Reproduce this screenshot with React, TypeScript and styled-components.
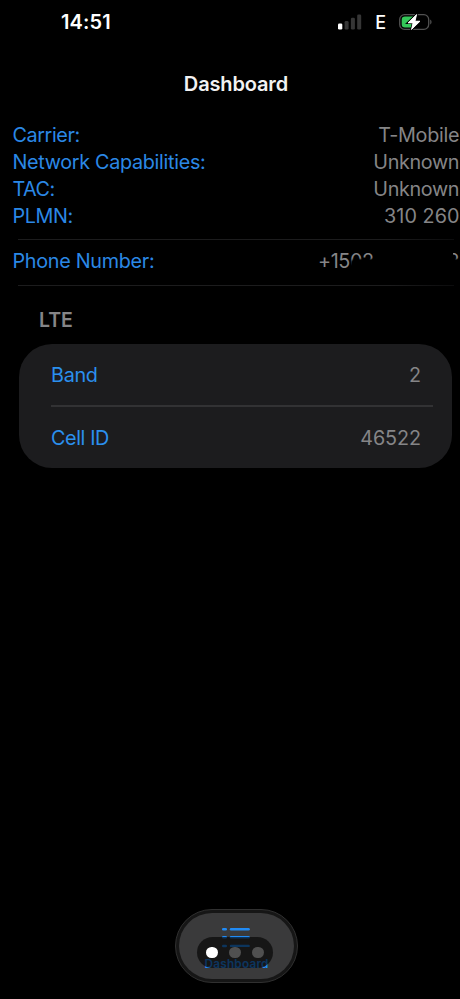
import React from 'react';
import styled, { createGlobalStyle } from 'styled-components';

const Global = createGlobalStyle`
  body { margin: 0; background: #000; }
  * { box-sizing: border-box; }
`;

const Screen = styled.main`
  width: 460px;
  height: 999px;
  background: #000;
  font-family: Inter, "Liberation Sans", sans-serif;
  display: flex;
  flex-direction: column;
  overflow: hidden;
`;

const StatusBar = styled.header`
  height: 44px;
  flex: none;
  display: flex;
  align-items: center;
  justify-content: space-between;
  padding: 0 28px 0 61px;
`;

const Label = styled.span<{ $track?: number }>`
  white-space: pre;
  letter-spacing: ${(p) => p.$track ?? 0}px;
  margin-right: ${(p) => -(p.$track ?? 0)}px;
`;

const Clock = styled(Label)`
  color: #fff;
  font-size: 20px;
  font-weight: 600;
`;

const StatusIcons = styled.div`
  display: flex;
  align-items: center;
`;

const Edge = styled.span`
  color: #fff;
  font-size: 18px;
  font-weight: 500;
  line-height: 22px;
  margin: 2px 13px 0 12px;
`;

const Title = styled.h1`
  margin: 0;
  height: 78px;
  flex: none;
  padding: 28px 0 0 12px;
  text-align: center;
  color: #f2f2f2;
  font-size: 20px;
  line-height: 25px;
  font-weight: 600;
`;

const Summary = styled.section`
  display: flex;
  flex-direction: column;
  padding: 0 0.5px 0 12.5px;
`;

const Line = styled.div<{ $height?: number }>`
  height: ${(p) => p.$height ?? 26.8}px;
  display: flex;
  align-items: center;
  justify-content: space-between;
  font-size: 19.8px;
`;

const Key = styled(Label)`
  color: #2b88e6;
`;

const Value = styled(Label)`
  color: #858587;
`;

const Rule = styled.hr<{ $top: number; $bottom: number }>`
  border: 0;
  height: 1px;
  width: 436px;
  margin: ${(p) => p.$top}px 0 ${(p) => p.$bottom}px 5px;
  background: linear-gradient(to right, #1c1c1d 85%, #0c0c0d);
`;

const Phone = styled.div`
  position: relative;
  width: 141.5px;
  height: 27px;
  display: flex;
  align-items: center;
  justify-content: space-between;
`;

const Redaction = styled.div`
  position: absolute;
  left: 34px;
  right: -2px;
  top: 13px;
  height: 14px;
  background: #000;
  border-top-left-radius: 3px;
  box-shadow: 0 0 2px 1px #000;
`;

const EndRedaction = styled.div`
  position: absolute;
  left: 56px;
  right: 7px;
  top: 0;
  bottom: 0;
  background: #000;
`;

const SectionTitle = styled.h2`
  margin: 21px 0 0 39px;
  height: 36.5px;
  flex: none;
  color: #858587;
  font-size: 19.5px;
  line-height: 26px;
  font-weight: 600;
`;

const Card = styled.section`
  margin: 0 8px 0 19px;
  height: 124px;
  border-radius: 33px;
  background: #1c1c1e;
  display: flex;
  flex-direction: column;
`;

const CardRow = styled.div`
  flex: 1;
  display: flex;
  align-items: center;
  justify-content: space-between;
  padding: 1px 31px 0 32px;
  font-size: 19.8px;
`;

const CardKey = styled(Key)`
  color: #2b90ee;
`;

const CardDivider = styled.div`
  height: 2px;
  margin: 0 19px 0 31.5px;
  background: #323234;
`;

const TabBar = styled.nav`
  margin: auto auto 16px 175px;
  width: 123px;
  height: 74px;
  flex: none;
  border: 1.5px solid #303030;
  border-radius: 37px;
  background: #161616;
  padding: 3px;
`;

const Tab = styled.div`
  position: relative;
  height: 100%;
  border-radius: 33px;
  background: #3a3a3b;
  display: flex;
  flex-direction: column;
  align-items: center;
`;

const ListIcon = styled.svg`
  display: block;
  margin: 14px 2px 0 0;
  flex: none;
`;

const TabName = styled(Label)`
  color: #218bf5;
  font-size: 11.8px;
  line-height: 14px;
  font-weight: 600;
  margin-top: 8px;
`;

const Pager = styled.div`
  position: absolute;
  left: 18px;
  top: 24px;
  width: 76px;
  height: 31px;
  border-radius: 15.5px;
  background: rgba(0, 0, 0, 0.62);
  display: flex;
  align-items: center;
  justify-content: center;
  gap: 11px;
`;

const Dot = styled.i<{ $active?: boolean }>`
  width: 11.7px;
  height: 11.7px;
  border-radius: 50%;
  background: ${(p) => (p.$active ? '#fff' : '#505050')};
`;

const summary = [
  { key: 'Carrier:', value: 'T-Mobile', keyTrack: -0.4, valueTrack: -0.3 },
  { key: 'Network Capabilities:', value: 'Unknown', keyTrack: -0.31, valueTrack: -0.35 },
  { key: 'TAC:', value: 'Unknown', keyTrack: -0.5, valueTrack: -0.35 },
  { key: 'PLMN:', value: '310 260', keyTrack: -0.4, valueTrack: 0.05 },
];

export default function App() {
  return (
    <>
      <Global />
      <Screen>
        <StatusBar>
          <Clock $track={0.1}>14:51</Clock>
          <StatusIcons>
            <svg width="25" height="16" viewBox="0 0 25 16">
              <rect x="0" y="9.5" width="4.3" height="6" rx="1.3" fill="#fff" />
              <rect x="6.6" y="7" width="4" height="8.5" rx="1.3" fill="#363636" />
              <rect x="12.9" y="3.8" width="4" height="11.7" rx="1.3" fill="#363636" />
              <rect x="19.2" y="0.5" width="4" height="15" rx="1.3" fill="#363636" />
            </svg>
            <Edge>E</Edge>
            <svg width="33" height="18" viewBox="0 0 33 18">
              <rect x="0.7" y="1.7" width="29" height="14.6" rx="4.8" fill="none" stroke="#515151" strokeWidth="1.3" />
              <path d="M31.2 6.5v5c1.8-.7 1.8-4.3 0-5z" fill="#515151" />
              <path d="M6 3.5h9v11H6a3.3 3.3 0 0 1-3.3-3.3V6.8A3.3 3.3 0 0 1 6 3.5z" fill="#34c759" />
              <path d="M17.6 1.5 9 9.9h5L12.5 16.5 21 8.2h-5z" fill="#fff" stroke="#000" strokeWidth="2.4" paintOrder="stroke" />
              <path d="M17.6 1.5 9 9.9h5L12.5 16.5 21 8.2h-5z" fill="#fff" stroke="#fff" strokeWidth="0.8" strokeLinejoin="round" />
            </svg>
          </StatusIcons>
        </StatusBar>
        <Title>
          <Label $track={-0.15}>Dashboard</Label>
        </Title>
        <Summary>
          {summary.map((row) => (
            <Line key={row.key}>
              <Key $track={row.keyTrack}>{row.key}</Key>
              <Value $track={row.valueTrack}>{row.value}</Value>
            </Line>
          ))}
          <Rule $top={10} $bottom={7} />
          <Line $height={27}>
            <Key $track={-0.3}>Phone Number:</Key>
            <Phone>
              <Value $track={-0.4}>+1502</Value>
              <Value>2</Value>
              <Redaction />
              <EndRedaction />
            </Phone>
          </Line>
          <Rule $top={10.5} $bottom={0.5} />
        </Summary>
        <SectionTitle>
          <Label>LTE</Label>
        </SectionTitle>
        <Card>
          <CardRow>
            <CardKey $track={-0.3}>Band</CardKey>
            <Value>2</Value>
          </CardRow>
          <CardDivider />
          <CardRow>
            <CardKey $track={-0.4}>Cell ID</CardKey>
            <Value $track={-0.1}>46522</Value>
          </CardRow>
        </Card>
        <TabBar>
          <Tab>
            <ListIcon width="28" height="22" viewBox="0 0 28 22" fill="#218bf5">
              {[1, 9, 17.7].map((y) => (
                <g key={y}>
                  <rect x="0" y={y} width="5" height="2.6" rx="1.3" />
                  <rect x="7.8" y={y} width="20" height="2.4" rx="1.2" />
                </g>
              ))}
            </ListIcon>
            <TabName $track={0.2}>Dashboard</TabName>
            <Pager>
              <Dot $active />
              <Dot />
              <Dot />
            </Pager>
          </Tab>
        </TabBar>
      </Screen>
    </>
  );
}
